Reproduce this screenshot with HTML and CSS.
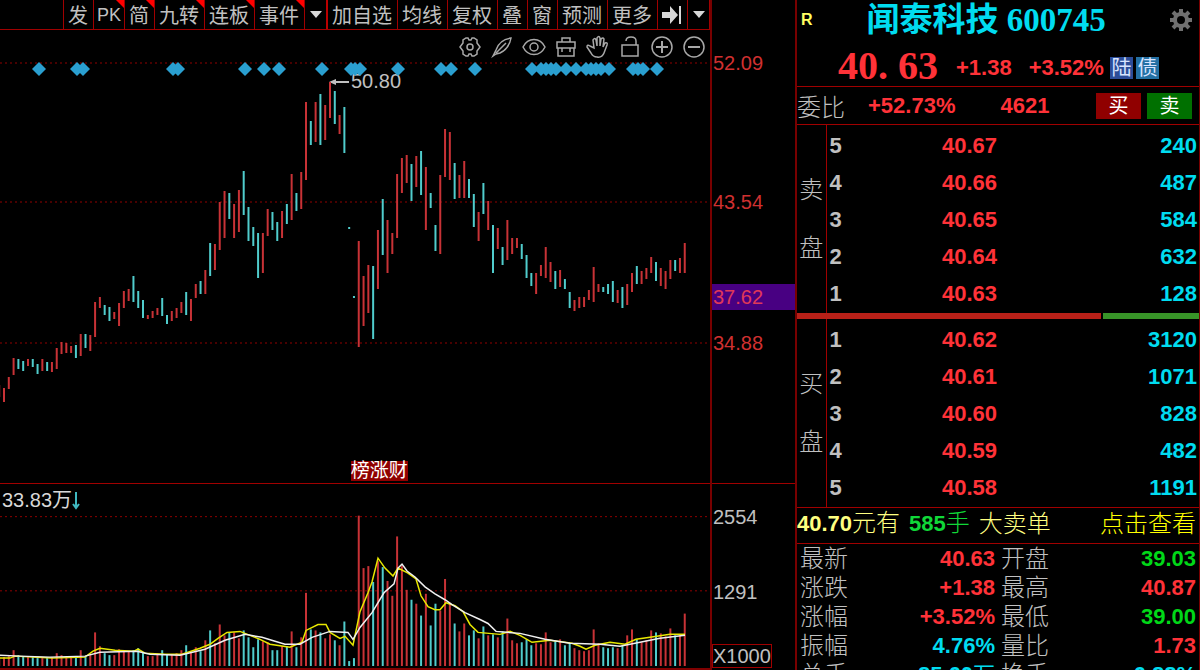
FILE: index.html
```html
<!DOCTYPE html>
<html lang="zh-CN">

<head>
  <meta charset="UTF-8">
  <meta name="viewport" content="width=device-width, initial-scale=1">
  <title>闻泰科技 600745</title>
  <link rel="stylesheet" href="styles.css">
</head>

<body>
  <main class="app">

    <section class="chart-side">
      <nav class="toolbar">
        <button class="tool">发</button>
        <button class="tool latin hot">PK</button>
        <button class="tool hot">简</button>
        <button class="tool hot">九转</button>
        <button class="tool hot">连板</button>
        <button class="tool hot">事件</button>
        <button class="tool arrow" aria-label="事件菜单"><svg width="12" height="7" viewBox="0 0 12 7"><path d="M0 0h12L6 7z" /></svg></button>
        <button class="tool split">加自选</button>
        <button class="tool">均线</button>
        <button class="tool">复权</button>
        <button class="tool">叠</button>
        <button class="tool">窗</button>
        <button class="tool">预测</button>
        <button class="tool">更多</button>
        <button class="tool jump" aria-label="跳到最新"><svg width="20" height="18" viewBox="0 0 20 18"><path d="M0 6h8V0l8 9-8 9v-6H0zM17 0h2v18h-2z" /></svg></button>
        <button class="tool arrow" aria-label="更多菜单"><svg width="12" height="7" viewBox="0 0 12 7"><path d="M0 0h12L6 7z" /></svg></button>
      </nav>

      <div class="price-chart">
        <svg id="price" class="plot" viewBox="0 30 710 453" preserveAspectRatio="none">
          <path class="grid" d="M0 63H710M0 202H710M0 343H710" />
          <path class="pointer" d="M333 82H349" />
          <path class="pointer-head" d="M329 82l7-3v6z" />
          <text class="peak" x="351" y="88">50.80</text>
        </svg>
        <div class="chart-tools">
          <button aria-label="设置"><svg viewBox="0 0 24 24"><path d="M8 3h2l1 2h2l1-2h2l3 2v3l3 4-3 4v3l-3 2h-2l-1-2h-2l-1 2H8l-3-2v-3l-3-4 3-4V5z" /><circle cx="12" cy="12" r="3" /></svg></button>
          <button aria-label="画笔"><svg viewBox="0 0 24 24"><path d="M3 21l3-6C8 9 13 4 21 3c-1 6-5 12-11 15l-4 1zM6 18L16 8" /></svg></button>
          <button aria-label="显示"><svg viewBox="0 0 24 24"><path d="M1 12C6 2 18 2 23 12C18 22 6 22 1 12z" /><circle cx="12" cy="12" r="4" /></svg></button>
          <button aria-label="工具箱"><svg viewBox="0 0 24 24"><path d="M3 7h18v6H3zM4 13v8h16v-8M8 7V3h8v4M8 13v4M16 13v4" /></svg></button>
          <button aria-label="拖动"><svg viewBox="0 0 24 24"><path d="M8 13L7 5q2-3 3 0l1 6V3q2-3 3 0v8l1-7q2-2 3 0l-1 8 2-4q3-1 2 2l-3 8q-2 5-7 4-4 0-6-4l-4-6q0-3 3-1z" /></svg></button>
          <button aria-label="解锁"><svg viewBox="0 0 24 24"><path d="M4 10h16v11H4zM8 6q0-4 5-4t5 4v4" /></svg></button>
          <button aria-label="放大"><svg viewBox="0 0 24 24"><circle cx="12" cy="12" r="10" /><path class="bold" d="M6 12h12M12 6v12" /></svg></button>
          <button aria-label="缩小"><svg viewBox="0 0 24 24"><circle cx="12" cy="12" r="10" /><path class="bold" d="M6 12h12" /></svg></button>
        </div>
        <div class="event-tag">榜涨财</div>
      </div>

      <div class="volume-chart">
        <svg id="volume" class="plot" viewBox="0 484 710 186" preserveAspectRatio="none">
          <path class="grid" d="M0 517H710M0 592H710" />
        </svg>
        <div class="volume-title">33.83万<svg width="8" height="18" viewBox="0 0 8 18"><path d="M4 0v16M1 12l3 4 3-4" /></svg></div>
      </div>
    </section>

    <aside class="axis">
      <div class="price-axis">
        <span class="tick t1">52.09</span>
        <span class="tick t2">43.54</span>
        <span class="tick cursor">37.62</span>
        <span class="tick t4">34.88</span>
      </div>
      <div class="volume-axis">
        <span class="tick t1">2554</span>
        <span class="tick t2">1291</span>
        <span class="tick unit">X1000</span>
      </div>
    </aside>

    <section class="quote">
      <header class="stock">
        <span class="margin-mark">R</span>
        <h1>闻泰科技 600745</h1>
        <button class="gear" aria-label="设置"><svg width="24" height="24" viewBox="0 0 24 24"><circle cx="12" cy="12" r="6" /><path d="M12 1v4M12 19v4M1 12h4M19 12h4M4 4l3 3M17 17l3 3M20 4l-3 3M7 17l-3 3" /></svg></button>
      </header>

      <div class="last">
        <span class="last-price">40<span class="dot">.</span>63</span>
        <span class="change">+1.38</span>
        <span class="percent">+3.52%</span>
        <span class="badge">陆</span>
        <span class="badge bond">债</span>
      </div>

      <div class="ratio">
        <span class="label">委比</span>
        <span class="ratio-percent">+52.73%</span>
        <span class="ratio-count">4621</span>
        <button class="trade buy">买</button>
        <button class="trade sell">卖</button>
      </div>

      <table class="book">
        <tr><th class="side" rowspan="5">卖<br>盘</th><td class="level">5</td><td class="up">40.67</td><td class="lots">240</td></tr>
        <tr><td>4</td><td class="up">40.66</td><td class="lots">487</td></tr>
        <tr><td>3</td><td class="up">40.65</td><td class="lots">584</td></tr>
        <tr><td>2</td><td class="up">40.64</td><td class="lots">632</td></tr>
        <tr><td>1</td><td class="up">40.63</td><td class="lots">128</td></tr>
      </table>
      <div class="balance"><span class="bids"></span><span class="asks"></span></div>
      <table class="book">
        <tr><th class="side" rowspan="5">买<br>盘</th><td class="level">1</td><td class="up">40.62</td><td class="lots">3120</td></tr>
        <tr><td>2</td><td class="up">40.61</td><td class="lots">1071</td></tr>
        <tr><td>3</td><td class="up">40.60</td><td class="lots">828</td></tr>
        <tr><td>4</td><td class="up">40.59</td><td class="lots">482</td></tr>
        <tr><td>5</td><td class="up">40.58</td><td class="lots">1191</td></tr>
      </table>

      <div class="notice">
        <span><b>40.70</b>元有</span>
        <span class="green"><b>585</b>手</span>
        <span>大卖单</span>
        <a href="#">点击查看</a>
      </div>

      <table class="stats">
        <tr><th>最新</th><td class="up">40.63</td><th>开盘</th><td class="down">39.03</td></tr>
        <tr><th>涨跌</th><td class="up">+1.38</td><th>最高</th><td class="up">40.87</td></tr>
        <tr><th>涨幅</th><td class="up">+3.52%</td><th>最低</th><td class="down">39.00</td></tr>
        <tr><th>振幅</th><td class="lots">4.76%</td><th>量比</th><td class="up">1.73</td></tr>
        <tr><th>总手</th><td class="lots">85.60<span class="wan">万</span></td><th>换手</th><td class="lots">6.88%</td></tr>
      </table>
    </section>

  </main>
  <script src="chart.js"></script>
</body>

</html>
```

FILE: styles.css
```css
* {
  box-sizing: border-box;
}

body {
  margin: 0;
  background: #000;
  color: #c0c0c0;
  font-family: "Liberation Sans", "Noto Sans CJK SC", sans-serif;
  font-size: 20px;
  overflow: hidden;
}

button {
  margin: 0;
  padding: 0;
  border: 0;
  background: none;
  color: inherit;
  font: inherit;
  cursor: pointer;
}

.app {
  display: grid;
  grid-template-columns: minmax(0, 1fr) 85px 405px;
  height: 100vh;
}

/* chart */
.chart-side {
  display: grid;
  grid-template-rows: 30px 453fr 187fr;
  min-height: 0;
}

.toolbar {
  display: flex;
  justify-content: flex-end;
  border-bottom: 1px solid #a00000;
  border-right: 1px solid #a00000;
}

.tool {
  position: relative;
  height: 29px;
  padding: 0 5px 0 4px;
  border-left: 1px solid #a00000;
  font-family: "Noto Sans CJK SC", sans-serif;
  line-height: 28px;
  white-space: nowrap;
}

.tool.latin {
  width: 31px;
  padding: 0;
  font-family: "Liberation Sans", sans-serif;
  font-size: 18px;
}

.tool.arrow {
  width: 22px;
  padding: 0;
}

.tool.jump {
  width: 30px;
}

.tool.split {
  border-left: 2px solid #b00;
}

.tool svg {
  fill: #d8d8d8;
}

.tool.arrow svg {
  display: block;
  margin: auto;
}

.tool.jump svg {
  display: block;
}

.hot::after {
  content: "";
  position: absolute;
  top: 0;
  right: 0;
  border-top: 8px solid #f00;
  border-left: 8px solid transparent;
}

.price-chart,
.volume-chart {
  position: relative;
  min-height: 0;
}

.volume-chart {
  border-top: 1px solid #a00000;
  border-bottom: 2px solid #800000;
}

.plot {
  display: block;
  width: 100%;
  height: 100%;
}

.plot path,
.plot polyline {
  fill: none;
}

.plot .grid {
  stroke: #900000;
  stroke-dasharray: 2 3;
}

.plot .rise {
  stroke: #c83236;
  stroke-width: 2;
}

.plot .fall {
  stroke: #50cccc;
  stroke-width: 2;
}

.plot .diamonds {
  fill: #2a9fd0;
}

.plot .pointer {
  stroke: #c0c0c0;
  stroke-width: 2;
}

.plot .pointer-head {
  fill: #c0c0c0;
}

.plot .peak {
  fill: #c0c0c0;
}

.plot .ma5 {
  stroke: #e8e800;
  stroke-width: 1.5;
}

.plot .ma10 {
  stroke: #f0f0f0;
  stroke-width: 1.5;
}

.chart-tools {
  position: absolute;
  top: 5px;
  right: 4px;
  display: flex;
  gap: 8px;
}

.chart-tools button,
.chart-tools svg {
  display: block;
  width: 24px;
  height: 24px;
}

.chart-tools svg {
  fill: none;
  stroke: #a8a8a8;
  stroke-width: 1.5;
}

.chart-tools .bold {
  stroke-width: 2;
}

.event-tag {
  position: absolute;
  left: 49.4%;
  bottom: 2px;
  background: #900000;
  color: #fff;
  font-size: 19px;
  line-height: 20px;
}

.volume-title {
  position: absolute;
  top: 2px;
  left: 2px;
  color: #d8d8d8;
  line-height: 28px;
}

.volume-title svg {
  fill: none;
  stroke: #40b8c0;
  stroke-width: 2;
  vertical-align: -3px;
}

/* axis */
.axis {
  display: grid;
  grid-template-rows: 483fr 187fr;
  min-height: 0;
  border-left: 2px solid #780000;
}

.price-axis {
  display: grid;
  grid-template-rows: 50fr 26px 113fr 26px 69fr 26px 20fr 26px 127fr;
  color: #d03030;
}

.volume-axis {
  display: grid;
  grid-template-rows: 20fr 26px 49fr 26px 39fr 24px 2fr;
  border-top: 1px solid #a00000;
}

.tick {
  padding-left: 1px;
  line-height: 26px;
}

.t1 {
  grid-row: 2;
}

.t2 {
  grid-row: 4;
}

.cursor {
  grid-row: 6;
  background: #480082;
  color: #e03858;
}

.t4 {
  grid-row: 8;
}

.unit {
  grid-row: 6;
  justify-self: start;
  padding: 0;
  border: 1px solid #a00000;
  line-height: 22px;
}

/* quote panel */
.quote {
  display: flex;
  flex-direction: column;
  min-height: 0;
  overflow: hidden;
  border-left: 2px solid #780000;
  border-right: 1px solid #780000;
  font-size: 22px;
}

.stock {
  display: flex;
  flex: none;
  align-items: center;
  height: 40px;
  padding: 0 6px 0 4px;
}

.margin-mark {
  color: #ffff60;
  font-size: 16px;
  font-weight: bold;
}

.stock h1 {
  margin: 0 auto 0 54px;
  color: #00dcf0;
  font-family: "Liberation Serif", "Noto Sans CJK SC", serif;
  font-size: 33px;
  line-height: 40px;
}

.gear svg {
  display: block;
  fill: none;
  stroke: #707070;
  stroke-width: 4;
}

.last {
  display: flex;
  flex: none;
  align-items: center;
  height: 47px;
  padding-left: 41px;
  border-bottom: 1px solid #a00000;
  color: #ff3238;
  font-weight: bold;
}

.last-price {
  margin-right: 18px;
  padding-top: 4px;
  font-family: "Liberation Serif", serif;
  font-size: 40px;
  line-height: 43px;
}

.dot {
  display: inline-block;
  width: 20px;
}

.change,
.percent {
  padding-top: 10px;
}

.percent {
  margin-left: 17px;
}

.badge {
  width: 23px;
  margin: 10px 0 0 6px;
  background: #2c4c98;
  color: #d8e4ff;
  font-size: 20px;
  font-weight: normal;
  line-height: 22px;
  text-align: center;
}

.bond {
  margin-left: 3px;
  background: #2470a4;
}

.ratio {
  display: flex;
  flex: none;
  align-items: center;
  height: 38px;
  padding-right: 7px;
  color: #ff3238;
  font-weight: bold;
}

.label {
  color: #c0c0c0;
  font-size: 24px;
  font-weight: 300;
}

.ratio-percent {
  margin-left: 23px;
}

.ratio-count {
  margin: 0 auto 0 45px;
}

.trade {
  width: 45px;
  height: 26px;
  color: #fff;
  font-size: 20px;
  font-weight: normal;
  line-height: 26px;
}

.buy {
  background: #900000;
}

.sell {
  margin-left: 6px;
  background: #007000;
}

.book,
.stats {
  width: 100%;
  border-collapse: collapse;
  table-layout: fixed;
}

.book {
  font-weight: bold;
}

.ratio,
.notice {
  border-bottom: 1px solid #a00000;
}

.book td {
  height: 37px;
  padding: 4px 0 0 3px;
  line-height: 33px;
  vertical-align: top;
}

.book tr:last-child td {
  height: 40px;
}

.book .side {
  width: 29px;
  padding: 0;
  border-right: 1px solid #a00000;
  font-size: 24px;
  font-weight: 300;
  line-height: 58px;
}

.book .level {
  width: 36px;
}

.book .up {
  width: 135px;
  text-align: right;
}

.lots {
  color: #00dcf0;
  text-align: right;
}

.book .lots {
  padding-right: 2px;
}

.balance {
  display: flex;
  flex: none;
  gap: 2px;
  height: 6px;
}

.bids {
  flex: 76;
  background: #b82018;
}

.asks {
  flex: 24;
  background: #389428;
}

.notice {
  display: flex;
  flex: none;
  align-items: center;
  gap: 9px;
  height: 37px;
  padding: 0 3px 4px 0;
  border-top: 1px solid #a00000;
  color: #ffff80;
  font-size: 24px;
  font-weight: 300;
  line-height: 32px;
  white-space: nowrap;
}

.notice b {
  font-size: 22px;
  font-weight: 700;
}

.notice a {
  margin-left: auto;
  color: #ffff00;
  text-decoration: none;
}

.notice .green {
  color: #10d838;
}

.stats {
  white-space: nowrap;
}

.stats th {
  width: 54px;
  height: 29px;
  padding: 0 0 0 3px;
  font-size: 24px;
  font-weight: 300;
  line-height: 29px;
  text-align: left;
}

.stats td {
  padding: 0 3px 0 0;
  font-weight: bold;
  line-height: 29px;
  text-align: right;
}

.wan {
  font-weight: normal;
}

.up {
  color: #ff3238;
}

.down {
  color: #00d818;
}
```

FILE: chart.js
```js
const STEP = 4.794;
const BASE = 668;
const NS = "http://www.w3.org/2000/svg";

// high, low, volume top; c = falling day
const days = `385 397 658 r|388 402 659 r|377 389 658 r|358 375 652 r|359 369 657 c|361 371 658 c|359 366 659 r|359 367 659 c|364 374 660 c|359 371 660 r
362 371 660 c|362 372 659 r|348 369 655 r|342 354 657 r|343 353 658 r|346 353 658 r|345 358 659 c|334 356 652 r|334 348 658 c|335 351 657 r
302 337 634 r|297 308 648 r|305 315 655 c|307 321 657 c|312 319 657 r|303 326 651 r|291 308 652 r|289 301 653 r|276 302 652 c|291 308 650 c
300 318 654 c|315 319 658 r|311 318 658 r|308 315 656 r|298 316 652 c|315 324 656 c|311 321 656 r|308 318 655 r|302 313 652 r|292 315 647 c
299 321 654 r|284 298 649 r|281 294 653 c|270 294 642 r|243 276 632 c|244 270 645 r|202 250 626 r|191 238 637 r|193 219 634 c|204 238 634 r
190 232 640 r|171 215 632 c|207 241 639 c|227 246 649 c|233 278 641 c|233 273 643 r|209 236 644 r|212 230 652 c|222 241 652 c|211 238 648 r
204 224 648 c|174 220 633 r|193 211 649 c|172 209 639 r|102 180 594 r|121 145 631 c|102 142 632 r|94 145 634 c|105 140 640 r|82 118 636 r
91 124 642 c|115 134 647 r|107 153 623 c|227 229 663 c|296 298 660 c|241 347 516 r|276 326 569 r|265 313 567 r|266 339 583 c|230 289 562 r
199 255 568 c|220 273 582 r|233 254 597 r|174 238 537 r|158 193 567 r|155 183 591 r|164 201 601 c|156 187 605 r|151 195 617 c|167 230 595 r
193 208 627 c|225 251 605 c|175 254 612 r|129 177 580 r|132 180 604 r|163 199 625 c|175 198 633 r|161 198 625 r|179 198 637 c|194 227 632 c
212 241 640 r|183 214 628 c|201 230 637 r|225 273 636 c|228 249 639 r|247 265 633 c|220 260 620 r|238 254 642 r|238 248 645 r|244 259 644 c
255 278 641 c|273 286 647 c|273 294 645 r|265 276 646 r|247 278 634 r|262 282 644 r|271 289 643 c|270 287 641 r|279 289 647 c|292 308 645 c
300 311 650 r|297 308 652 r|297 307 653 r|290 300 652 r|267 302 631 r|284 292 645 r|287 292 649 c|284 294 650 c|281 302 649 c|290 303 650 r
287 308 647 c|284 305 637 r|273 292 631 r|266 284 641 c|271 284 644 r|268 279 642 r|257 273 632 r|262 281 634 c|268 286 635 r|271 289 638 r
260 279 630 r|260 271 637 c|258 273 637 r|243 273 615 r`.split(/[|\n]/).map((d) => d.split(" "));

const events = [39, 77, 83, 173, 178, 245, 264, 279, 322, 351, 355, 360, 398, 441, 451, 475, 532, 541, 546, 551, 556, 566, 576, 586, 591, 596, 601, 609, 633, 638, 643, 657];

const ma5 = "0,660 10,660 15,658 33,659 52,660 85,659 93,653 100,650 115,652 134,653 138,651 145,655 165,656 182,656 200,650 210,646 218,640 227,634 240,633 250,637 260,641 270,646 290,649 302,644 306,632 318,626 326,626 330,634 340,640 345,638 353,647 360,613 368,594 372,583 378,559 385,569 393,577 398,569 408,574 416,580 421,597 428,608 435,611 440,611 446,604 455,607 463,613 470,626 478,634 500,636 510,633 520,637 532,644 550,642 572,645 580,648 586,651 595,647 610,644 625,646 636,641 650,639 670,636 685,636";
const ma10 = "0,657 20,658 50,659 85,658 100,654 137,653 150,656 180,657 205,651 225,642 245,636 262,639 275,643 285,646 300,646 312,639 330,633 348,634 353,641 360,629 372,614 384,594 394,585 398,569 402,565 407,572 415,578 425,588 435,595 445,601 452,606 465,614 480,621 488,625 496,633 520,635 545,641 570,645 600,646 620,648 640,644 660,640 685,637";

const price = document.getElementById("price");
const volume = document.getElementById("volume");

function add(parent, tag, attrs) {
  const el = document.createElementNS(NS, tag);
  for (const key in attrs) el.setAttribute(key, attrs[key]);
  parent.appendChild(el);
}

days.forEach(([high, low, vol, kind], i) => {
  const x = 4 + (i - 1) * STEP;
  const name = kind === "r" ? "rise" : "fall";
  add(price, "line", { x1: x, x2: x, y1: high, y2: low, class: name });
  add(volume, "line", { x1: x, x2: x, y1: vol, y2: BASE, class: name });
});

add(volume, "polyline", { points: ma5, class: "ma5" });
add(volume, "polyline", { points: ma10, class: "ma10" });

events.forEach((x) => {
  add(price, "polygon", { points: `${x - 7},69 ${x},62 ${x + 7},69 ${x},76`, class: "diamonds" });
});
```
